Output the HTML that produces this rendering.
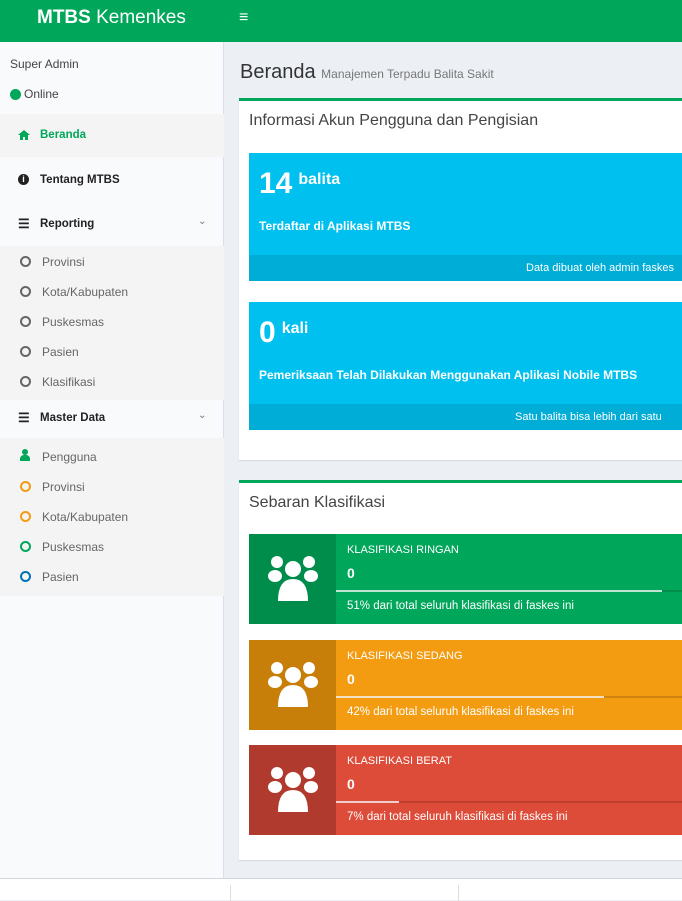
<!DOCTYPE html>
<html><head><meta charset="utf-8"><style>
*{box-sizing:border-box;margin:0;padding:0}
body{width:682px;height:900px;overflow:hidden;background:#ecf0f5;font-family:"Liberation Sans",sans-serif;position:relative;color:#333}
.hdr{position:absolute;left:0;top:0;width:682px;height:42px;background:#00a65a}
.logo{position:absolute;left:37px;top:7px;color:#fff;font-size:19px}
.burger{position:absolute;left:239px;top:9px;color:#fff;font-size:16px;font-weight:bold}
.side{position:absolute;left:0;top:42px;width:224px;height:836px;background:#f9fafc;border-right:1px solid #dde}
.t{position:absolute;font-size:12px;color:#444}
.bar{position:absolute;left:0;width:224px;background:#f4f4f4}
.circ{position:absolute;left:20px;width:11px;height:11px;border:2px solid #666;border-radius:50%}
.sub{position:absolute;left:42px;font-size:12px;color:#666}
.box{position:absolute;left:239px;width:460px;background:#fff;border-top:3px solid #00a65a;box-shadow:0 1px 1px rgba(0,0,0,.1)}
.blue{position:absolute;left:249px;width:450px;height:128px;background:#00c0ef;color:#fff}
.blue .ft{position:absolute;left:0;bottom:0;width:100%;height:26px;background:#00add7;font-size:11px;white-space:nowrap;overflow:hidden}
.ib{position:absolute;left:249px;width:450px;height:90px;color:#fff}
.ib .ic{position:absolute;left:0;top:0;width:87px;height:90px}
.ib .tt{position:absolute;left:98px;top:10px;font-size:11px}
.ib .n{position:absolute;left:98px;top:31px;font-size:14px;font-weight:bold}
.ib .pb{position:absolute;left:87px;top:56px;width:363px;height:2px;background:rgba(0,0,0,.15)}
.ib .pb i{display:block;height:2px;background:rgba(255,255,255,.75)}
.ib .d{position:absolute;left:98px;top:66px;font-size:11.5px}
.foot{position:absolute;left:0;top:878px;width:682px;height:22px;background:#fff;border-top:1px solid #d2d6de}
</style></head><body>
<div class="hdr"><div class="logo"><b>MTBS</b> Kemenkes</div><div class="burger">&#8801;</div></div>
<div class="side">
<div class="t" style="left:10px;top:15px;font-size:12px">Super Admin</div>
<div style="position:absolute;left:10px;top:47px;width:11px;height:11px;border-radius:50%;background:#00a65a"></div>
<div class="t" style="left:24px;top:45px">Online</div>
<div class="bar" style="top:72px;height:43px"></div>
<svg style="position:absolute;left:18px;top:88px" width="12" height="10"><path d="M6 0L0 5H2V10H5V7H7V10H10V5H12Z" fill="#00a65a"/></svg>
<div class="t" style="left:40px;top:87px;color:#00a65a;font-weight:bold;font-size:11.5px">Beranda</div>
<div style="position:absolute;left:18px;top:132px;width:11px;height:11px;border-radius:50%;background:#222;color:#fff;font-size:9px;text-align:center;line-height:11px;font-weight:bold">i</div>
<div class="t" style="left:40px;top:132px;color:#222;font-weight:bold;font-size:11.5px">Tentang MTBS</div>
<div class="t" style="left:18px;top:174px;color:#222;font-size:13px;font-weight:bold">&#9776;</div>
<div class="t" style="left:40px;top:176px;color:#222;font-weight:bold;font-size:11.5px">Reporting</div>
<div class="t" style="left:198px;top:174px;color:#777;font-size:10px">&#8964;</div>
<div class="bar" style="top:204px;height:154px"></div>
<div class="circ" style="top:214px"></div><div class="sub" style="top:213px">Provinsi</div>
<div class="circ" style="top:244px"></div><div class="sub" style="top:243px">Kota/Kabupaten</div>
<div class="circ" style="top:274px"></div><div class="sub" style="top:273px">Puskesmas</div>
<div class="circ" style="top:304px"></div><div class="sub" style="top:303px">Pasien</div>
<div class="circ" style="top:334px"></div><div class="sub" style="top:333px">Klasifikasi</div>
<div class="t" style="left:18px;top:368px;color:#222;font-size:13px;font-weight:bold">&#9776;</div>
<div class="t" style="left:40px;top:370px;color:#222;font-weight:bold;font-size:11.5px">Master Data</div>
<div class="t" style="left:198px;top:368px;color:#777;font-size:10px">&#8964;</div>
<div class="bar" style="top:396px;height:158px"></div>
<div style="position:absolute;left:22px;top:407px;width:6px;height:6px;border-radius:50%;background:#00a65a"></div>
<div style="position:absolute;left:20px;top:413px;width:10px;height:6px;border-radius:4px 4px 0 0;background:#00a65a"></div>
<div class="sub" style="top:408px">Pengguna</div>
<div class="circ" style="top:439px;border-color:#f39c12"></div><div class="sub" style="top:438px">Provinsi</div>
<div class="circ" style="top:469px;border-color:#f39c12"></div><div class="sub" style="top:468px">Kota/Kabupaten</div>
<div class="circ" style="top:499px;border-color:#00a65a"></div><div class="sub" style="top:498px">Puskesmas</div>
<div class="circ" style="top:529px;border-color:#0073b7"></div><div class="sub" style="top:528px">Pasien</div>
</div>
<div style="position:absolute;left:240px;top:61px;font-size:20px;color:#333">Beranda <span style="font-size:12px;color:#777">Manajemen Terpadu Balita Sakit</span></div>
<div class="box" style="top:98px;height:362px"></div>
<div style="position:absolute;left:249px;top:112px;font-size:16px;color:#444">Informasi Akun Pengguna dan Pengisian</div>
<div class="blue" style="top:153px">
<div style="position:absolute;left:10px;top:14px;font-size:30px;font-weight:bold">14<sup style="font-size:16px;vertical-align:top;position:relative;top:4px;margin-left:6px">balita</sup></div>
<div style="position:absolute;left:10px;top:66px;font-size:12px;font-weight:bold">Terdaftar di Aplikasi MTBS</div>
<div class="ft"><span style="position:absolute;left:277px;top:7px">Data dibuat oleh admin faskes</span></div>
</div>
<div class="blue" style="top:302px">
<div style="position:absolute;left:10px;top:14px;font-size:30px;font-weight:bold">0<sup style="font-size:16px;vertical-align:top;position:relative;top:4px;margin-left:6px">kali</sup></div>
<div style="position:absolute;left:10px;top:66px;font-size:12px;font-weight:bold">Pemeriksaan Telah Dilakukan Menggunakan Aplikasi Nobile MTBS</div>
<div class="ft"><span style="position:absolute;left:266px;top:7px">Satu balita bisa lebih dari satu</span></div>
</div>
<div class="box" style="top:480px;height:380px"></div>
<div style="position:absolute;left:249px;top:494px;font-size:16px;color:#444">Sebaran Klasifikasi</div>
<svg width="0" height="0" style="position:absolute"><defs><g id="grp" fill="#fff"><circle cx="9" cy="7" r="6"/><circle cx="41" cy="7" r="6"/><circle cx="25" cy="14" r="8"/><ellipse cx="7" cy="21" rx="7" ry="6"/><ellipse cx="43" cy="21" rx="7" ry="6"/><path d="M10 46 Q10 24 25 24 Q40 24 40 46 Z"/></g></defs></svg>
<div class="ib" style="top:534px;background:#00a65a"><div class="ic" style="background:#008d4c"><svg width="50" height="48" style="position:absolute;left:19px;top:21px"><use href="#grp"/></svg></div><div class="tt">KLASIFIKASI RINGAN</div><div class="n">0</div><div class="pb"><i style="width:326px"></i></div><div class="d">51% dari total seluruh klasifikasi di faskes ini</div></div>
<div class="ib" style="top:640px;background:#f39c12"><div class="ic" style="background:#c87f0a"><svg width="50" height="48" style="position:absolute;left:19px;top:21px"><use href="#grp"/></svg></div><div class="tt">KLASIFIKASI SEDANG</div><div class="n">0</div><div class="pb"><i style="width:268px"></i></div><div class="d">42% dari total seluruh klasifikasi di faskes ini</div></div>
<div class="ib" style="top:745px;background:#dd4b39"><div class="ic" style="background:#b03a2d"><svg width="50" height="48" style="position:absolute;left:19px;top:21px"><use href="#grp"/></svg></div><div class="tt">KLASIFIKASI BERAT</div><div class="n">0</div><div class="pb"><i style="width:63px"></i></div><div class="d">7% dari total seluruh klasifikasi di faskes ini</div></div>
<div class="foot"><div style="position:absolute;left:230px;top:6px;width:1px;height:16px;background:#ddd"></div><div style="position:absolute;left:458px;top:6px;width:1px;height:16px;background:#ddd"></div></div>
</body></html>
